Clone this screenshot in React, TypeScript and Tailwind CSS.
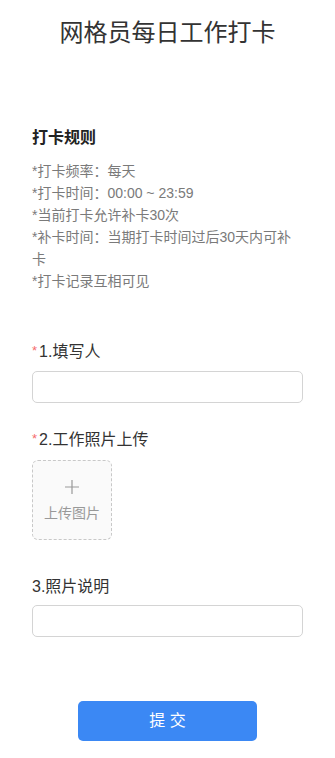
import { useState } from 'react'

const rules = [
  '*打卡频率：每天',
  '*打卡时间：00:00 ~ 23:59',
  '*当前打卡允许补卡30次',
  '*补卡时间：当期打卡时间过后30天内可补卡',
  '*打卡记录互相可见',
]

function Label({ text, required }: { text: string; required?: boolean }) {
  return (
    <div className="flex items-center text-[16px] leading-[24px] text-[#333]">
      {required && (
        <span className="mr-[2px] -mt-[4px] text-[13px] leading-none text-[#f56c6c]">*</span>
      )}
      <span>{text}</span>
    </div>
  )
}

export default function App() {
  const [name, setName] = useState('')
  const [desc, setDesc] = useState('')

  return (
    <div
      className="min-h-[758px] bg-white px-8 pb-4"
      style={{ fontFamily: '"Liberation Sans", "Noto Sans CJK SC", sans-serif' }}
    >
      <h1 className="pt-[17px] text-center text-[24px] leading-[32px] font-normal text-[#333]">
        网格员每日工作打卡
      </h1>

      <div className="mt-[77px] text-[16px] leading-[24px] font-bold text-[#222]">打卡规则</div>
      <div className="mt-[10px] text-[14px] leading-[22px] text-[#7a7a7a]">
        {rules.map((r) => (
          <p key={r}>{r}</p>
        ))}
      </div>

      <div className="mt-[48px]">
        <Label text="1.填写人" required />
        <input
          value={name}
          onChange={(e) => setName(e.target.value)}
          className="mt-[7px] block h-[32px] w-full rounded-[5px] border border-[#d4d4d4] px-3 text-[14px] outline-none"
        />
      </div>

      <div className="mt-[25px]">
        <Label text="2.工作照片上传" required />
        <div className="mt-[8px] flex h-[80px] w-[80px] flex-col items-center justify-center rounded-[6px] border border-dashed border-[#c8c8c8] bg-[#fafafa] text-[#999]">
          <svg width="16" height="16" viewBox="0 0 16 16" className="mt-[1px]">
            <path d="M8 1v14M1 8h14" stroke="#999" strokeWidth="1.2" fill="none" />
          </svg>
          <span className="mt-[9px] text-[14px] leading-[18px]">上传图片</span>
        </div>
      </div>

      <div className="mt-[35px]">
        <Label text="3.照片说明" />
        <input
          value={desc}
          onChange={(e) => setDesc(e.target.value)}
          className="mt-[6px] block h-[32px] w-full rounded-[5px] border border-[#d4d4d4] px-3 text-[14px] outline-none"
        />
      </div>

      <div className="mt-[64px] flex justify-center">
        <button className="h-[40px] w-[179px] rounded-[5px] bg-[#3b88f4] text-[16px] text-white">
          提&nbsp;交
        </button>
      </div>
    </div>
  )
}
